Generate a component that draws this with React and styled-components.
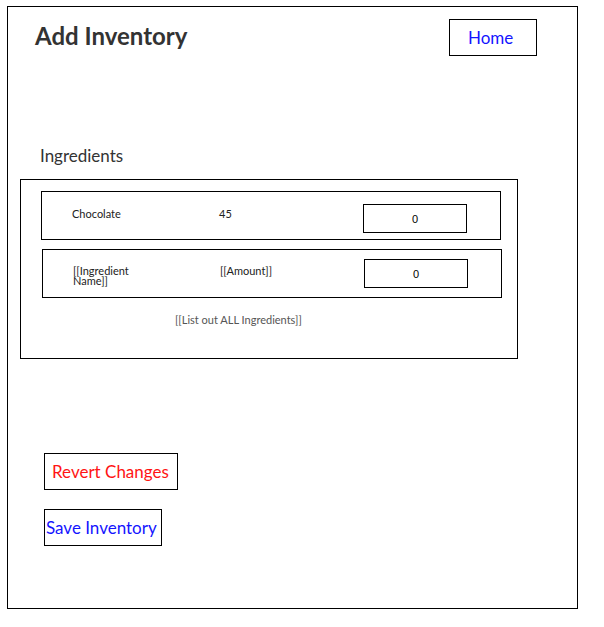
import React from 'react';
import styled, { createGlobalStyle } from 'styled-components';

const GlobalStyle = createGlobalStyle`
  * {
    box-sizing: border-box;
  }
  body {
    margin: 0;
    background: #fff;
    font-family: Lato, "Open Sans", sans-serif;
  }
`

const Frame = styled.div`
  margin: 6px 0 0 7px;
  width: 571px;
  height: 603px;
  border: 1px solid #000;
  display: flex;
  flex-direction: column;
`

const Header = styled.div`
  display: flex;
  justify-content: space-between;
  align-items: flex-start;
  padding: 12px 40px 0 27px;
`

const Title = styled.h1`
  margin: 3px 0 0;
  font-size: 24px;
  line-height: 28px;
  font-weight: 700;
  color: #333;
`

const LinkButton = styled.button`
  width: ${(p) => p.$width}px;
  height: 37px;
  margin: 0;
  padding: 0 0 0 ${(p) => p.$pad}px;
  border: 1px solid #000;
  background: #fff;
  text-align: left;
  font-family: Lato, "Open Sans", sans-serif;
  font-size: 17px;
  color: ${(p) => p.$color};
  cursor: pointer;
`

const SectionLabel = styled.div`
  margin: 89px 0 0 32px;
  font-size: 17px;
  line-height: 22px;
  color: #333;
`

const ListBox = styled.div`
  margin: 12px 0 0 12px;
  width: 498px;
  height: 180px;
  border: 1px solid #000;
  padding: 11px 0 0 20px;
`

const Row = styled.div`
  width: 460px;
  height: 49px;
  margin: ${(p) => p.$top}px 0 0 ${(p) => p.$shift}px;
  border: 1px solid #000;
  display: grid;
  grid-template-columns: 147px 144px 104px;
  padding: ${(p) => p.$pad}px 0 0 30px;
  align-items: start;
`

const Cell = styled.div`
  max-width: 75px;
  font-size: 11px;
  line-height: 10px;
  color: #222;
  padding-top: 2px;
`

const CountInput = styled.input`
  width: 104px;
  height: 29px;
  margin: ${(p) => p.$offset}px 0 0;
  border: 1px solid #000;
  text-align: center;
  font-family: "Liberation Sans", Arial, sans-serif;
  font-size: 11px;
  color: #000;
  outline: none;
`

const Note = styled.div`
  margin: 15px 0 0 134px;
  font-size: 11px;
  color: #555;
`

const Actions = styled.div`
  display: flex;
  flex-direction: column;
  align-items: flex-start;
  gap: 19px;
  margin: 94px 0 0 36px;
`

function App() {
  return (
    <>
      <GlobalStyle />
      <Frame>
        <Header>
          <Title>Add Inventory</Title>
          <LinkButton $width={88} $pad={18} $color="#1414ff">Home</LinkButton>
        </Header>
        <SectionLabel>Ingredients</SectionLabel>
        <ListBox>
          <Row $top={0} $shift={0} $pad={15}>
            <Cell>Chocolate</Cell>
            <Cell>45</Cell>
            <CountInput $offset={-3} defaultValue="0" />
          </Row>
          <Row $top={9} $shift={1} $pad={14}>
            <Cell>[[Ingredient Name]]</Cell>
            <Cell>[[Amount]]</Cell>
            <CountInput $offset={-5} defaultValue="0" />
          </Row>
          <Note>[[List out ALL Ingredients]]</Note>
        </ListBox>
        <Actions>
          <LinkButton $width={134} $pad={7} $color="#ff1414">Revert Changes</LinkButton>
          <LinkButton $width={118} $pad={1} $color="#1414ff">Save Inventory</LinkButton>
        </Actions>
      </Frame>
    </>
  );
}

export default App;
